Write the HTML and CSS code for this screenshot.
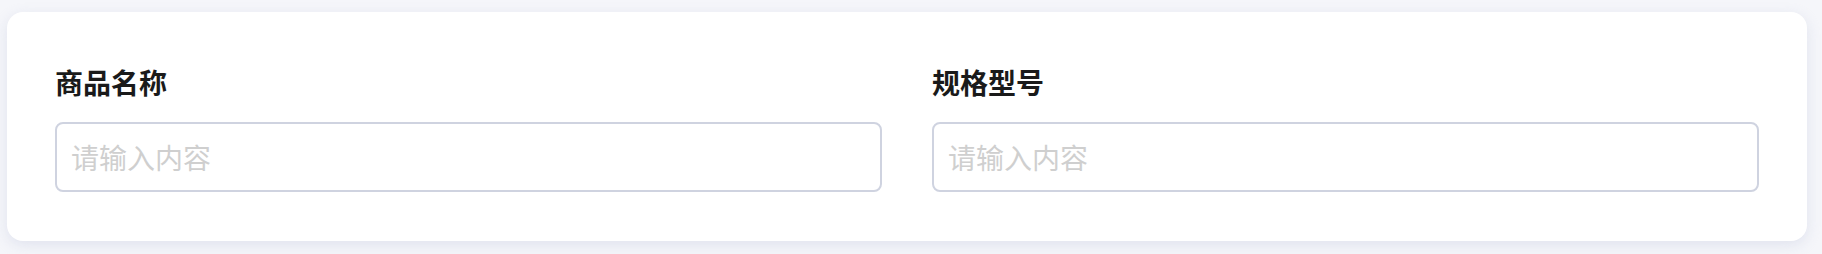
FILE: index.html
```html
<!DOCTYPE html>
<html>
  <head>
    <meta charset="utf-8">
    <title>商品信息</title>
    <link rel="stylesheet" href="styles.css">
  </head>
  <body>
    <div class="card">
      <div class="field">
        <label class="label">商品名称</label>
        <input class="input" type="text" placeholder="请输入内容">
      </div>
      <div class="field">
        <label class="label">规格型号</label>
        <input class="input" type="text" placeholder="请输入内容">
      </div>
    </div>
  </body>
</html>
```

FILE: styles.css
```css
*{
  margin: 0;
  padding: 0;
  box-sizing: border-box;
}
html{
  background: #f5f6fa;
}
body{
  padding: 12px 15px 13px 7px;
  font-family: "Noto Sans CJK SC", "Noto Sans", sans-serif;
}
.card{
  display: grid;
  grid-template-columns: 1fr 1fr;
  column-gap: 50px;
  height: 229px;
  padding: 50px 48px 48px;
  background: #fff;
  border-radius: 16px;
  box-shadow: 0 4px 14px rgba(200, 205, 225, 0.45);
}
.field{
  display: flex;
  flex-direction: column;
}
.label{
  font-size: 28px;
  font-weight: 700;
  line-height: 40px;
  color: #1a1a1a;
  margin-bottom: 20px;
}
.input{
  height: 70px;
  padding: 0 14px;
  border: 2px solid #cfd3e0;
  border-radius: 8px;
  font-family: inherit;
  font-size: 28px;
  color: #333;
  background: #fff;
  outline: none;
}
.input::placeholder{
  color: #cfcfcf;
}
```
